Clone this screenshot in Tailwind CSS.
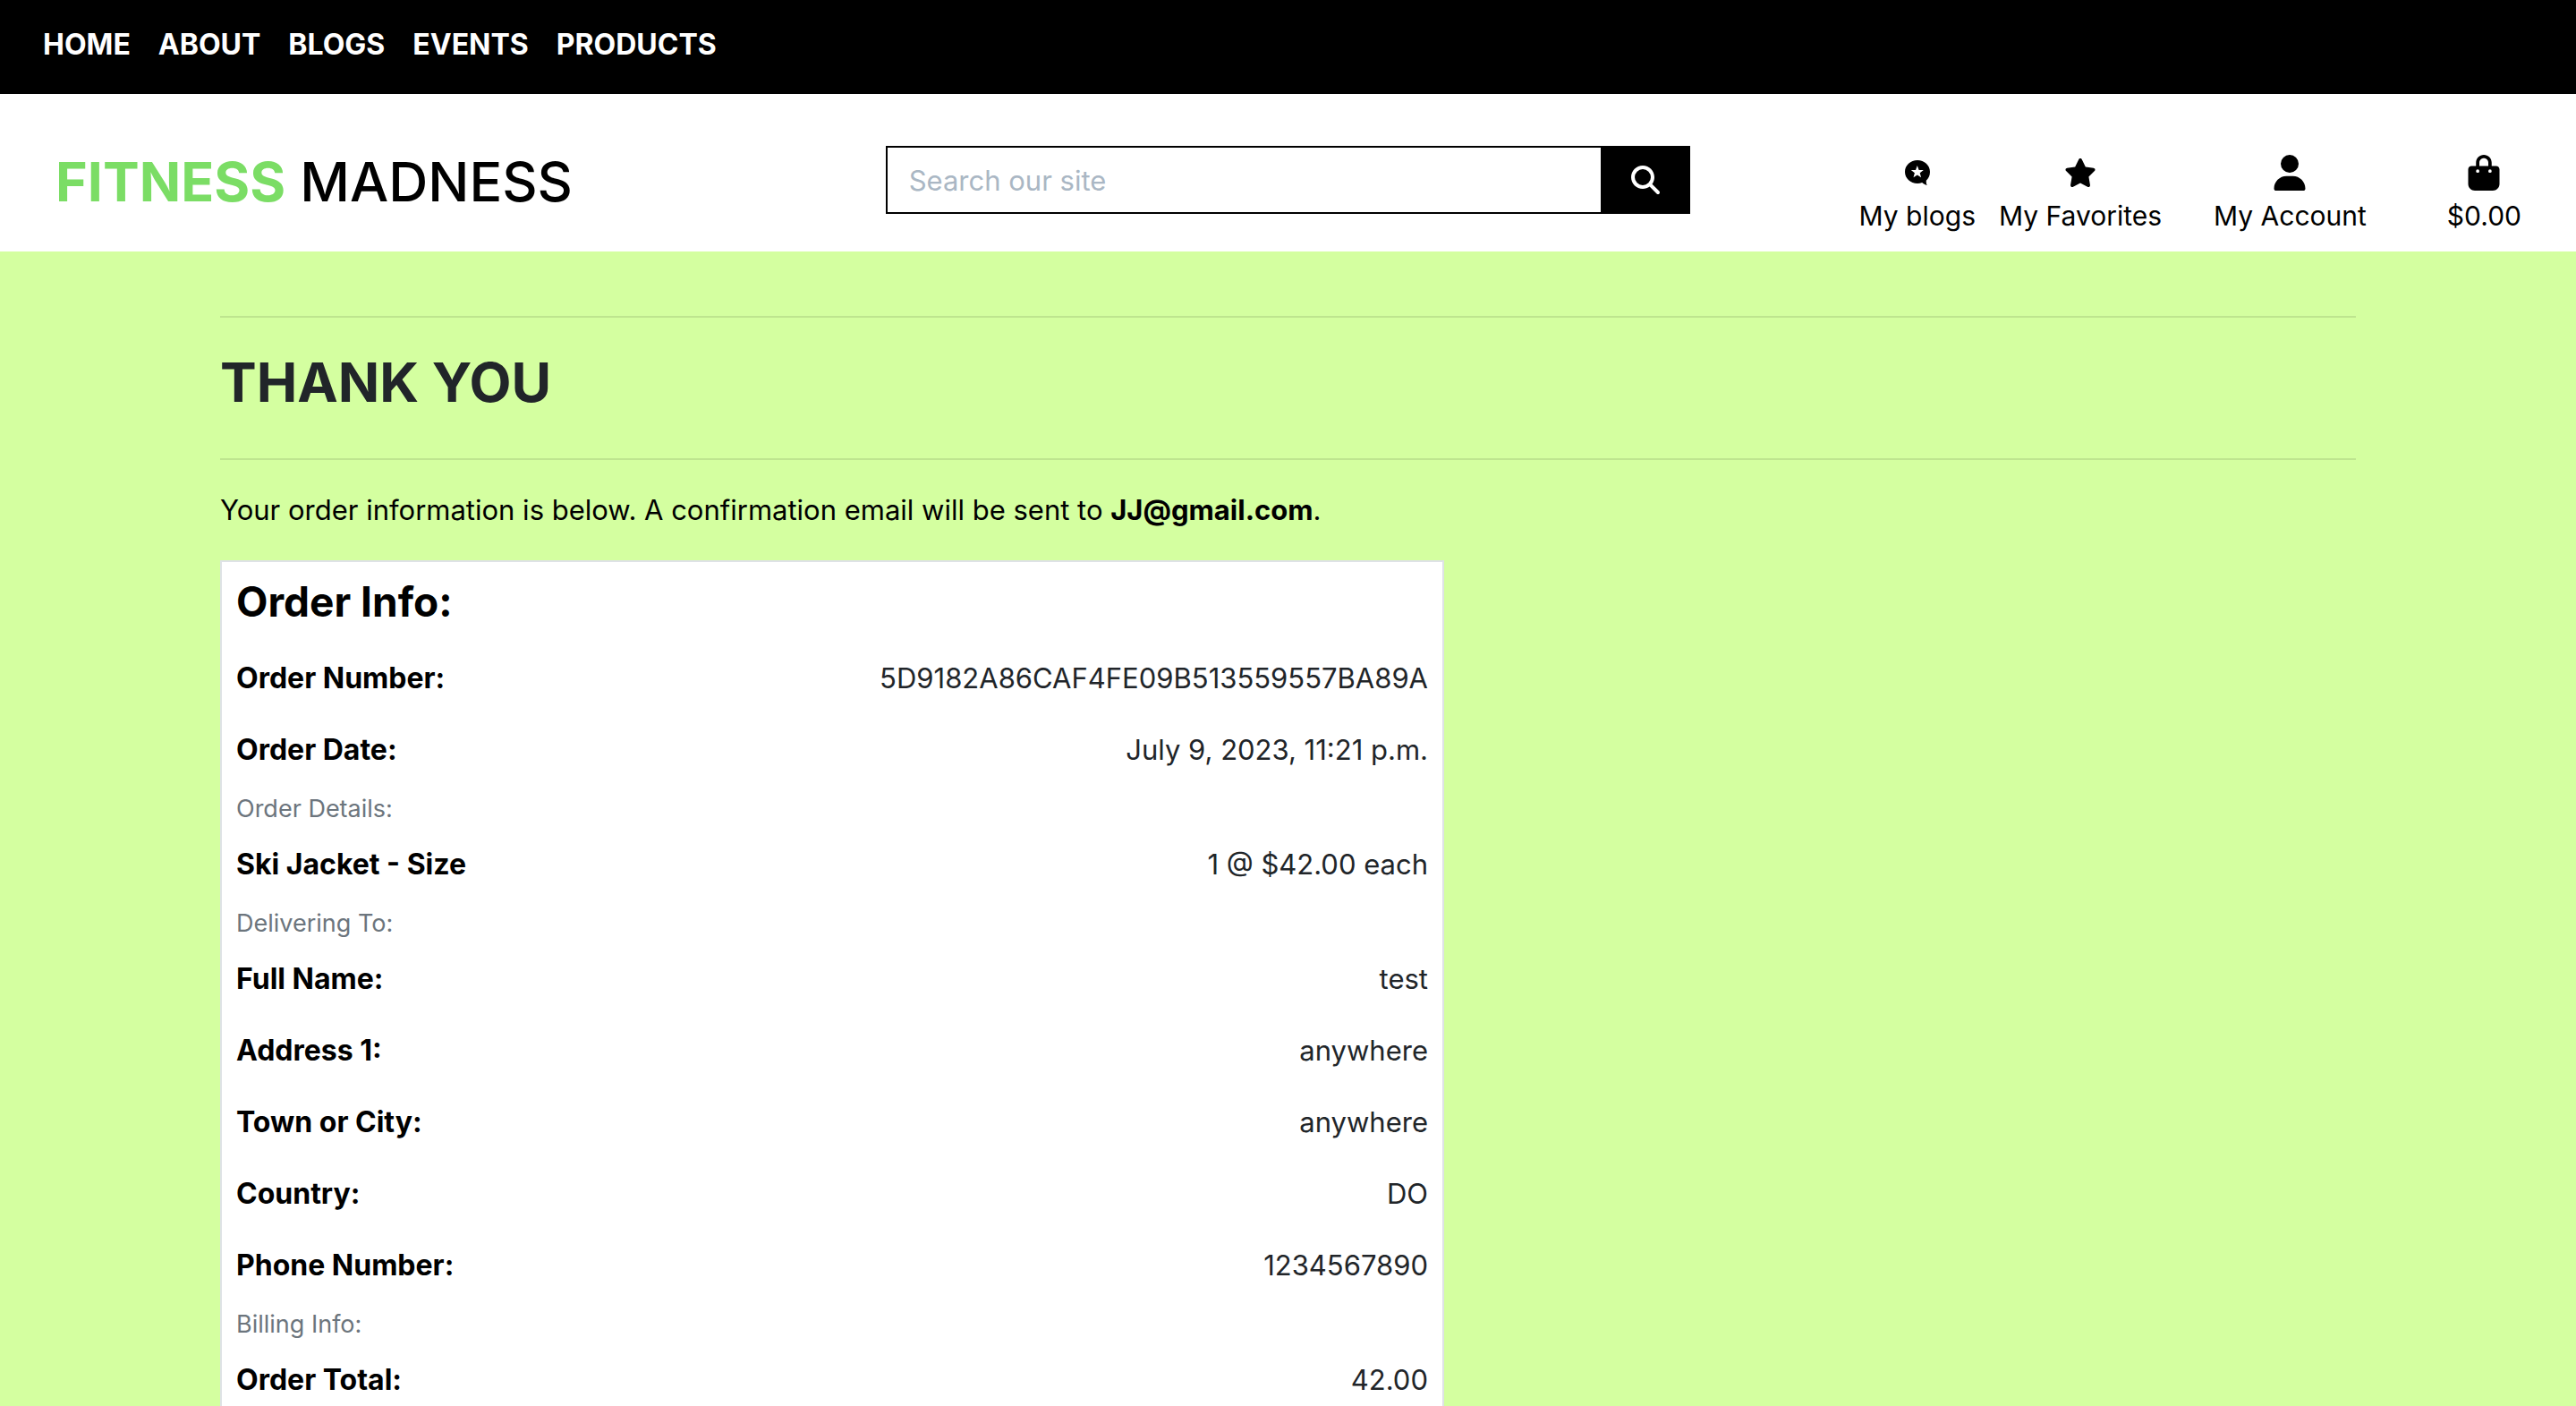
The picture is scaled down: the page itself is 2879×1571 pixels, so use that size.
<!DOCTYPE html>
<html lang="en">
<head>
<meta charset="utf-8">
<title>Fitness Madness - Thank You</title>
<script src="https://cdn.jsdelivr.net/npm/@tailwindcss/browser@4"></script>
</head>
<body class="min-h-screen bg-[#d4ffa0] font-[Inter,sans-serif] text-[31px] leading-[48px] text-black">
<nav class="flex h-[105px] items-start gap-[31px] bg-black px-12 pt-[26px] text-[32px] font-bold text-white" aria-label="Main">
  <a href="#">HOME</a><a href="#">ABOUT</a><a href="#">BLOGS</a><a href="#">EVENTS</a><a href="#">PRODUCTS</a>
</nav>
<header class="grid h-[176px] grid-cols-3 bg-white">
  <div class="pt-[60px] pl-[62px]">
    <a href="#" class="text-[61px] leading-[76px] font-medium whitespace-nowrap"><span class="font-bold text-[#7bdd65]">FITNESS</span> MADNESS</a>
  </div>
  <form class="flex px-[30px] pt-[58px]">
    <input type="search" aria-label="Search our site" placeholder="Search our site" class="h-[76px] min-w-0 flex-1 border-2 border-black bg-white px-6 placeholder:text-[#aab7c4]">
    <button type="button" aria-label="Search" class="-ml-0.5 flex h-[76px] w-[100px] items-center justify-center bg-black text-white">
      <svg class="size-8" viewBox="0 0 512 512" fill="currentColor"><path d="M416 208c0 45.900-14.900 88.300-40 122.700L502.600 457.400c12.500 12.500 12.500 32.800 0 45.300s-32.800 12.500-45.300 0L330.700 376c-34.400 25.200-76.800 40-122.700 40C93.100 416 0 322.900 0 208S93.100 0 208 0S416 93.100 416 208zM208 352a144 144 0 1 0 0-288 144 144 0 1 0 0 288z"/></svg>
    </button>
  </form>
  <div class="flex justify-end pt-[68px] pr-[61px] text-[30px] leading-[56px] whitespace-nowrap">
    <a href="#" class="mr-[26px] flex flex-col items-center">
      <span class="flex h-10 items-center"><svg class="size-8" viewBox="0 0 32 32"><path fill="currentColor" d="M16 2C8.300 2 2 7.600 2 15s6.300 13 14 13c1.800 0 3.600-.3 5.200-.9 1.500 1.200 3.300 2.300 5.600 3-.9-1.500-1.100-3.200-1-5.300C28.400 22.500 30 19 30 15 30 7.600 23.700 2 16 2z"/><path fill="#fff" d="m15.800 8 1.800 4.900 5.200.2-4.100 3.200 1.400 5-4.300-2.900-4.300 2.900 1.400-5-4.100-3.200 5.200-.2z"/></svg></span>
      <span>My blogs</span>
    </a>
    <a href="#" class="mr-[58px] flex flex-col items-center">
      <span class="flex h-10 items-center"><svg class="h-8 w-9" viewBox="0 0 576 512" fill="currentColor"><path d="M316.900 18C311.600 7 300.400 0 288.100 0s-23.400 7-28.800 18L195 150.300 51.400 171.500c-12 1.800-22 10.200-25.700 21.700s-.7 24.200 7.900 32.700L137.800 329 113.200 474.700c-2 12 3 24.200 12.900 31.300s23 8 33.800 2.300l128.300-68.500 128.300 68.500c10.800 5.700 23.900 4.900 33.800-2.300s14.900-19.300 12.900-31.300L438.500 329 542.700 225.900c8.600-8.500 11.700-21.200 7.900-32.700s-13.700-19.900-25.700-21.700L381.200 150.300 316.900 18z"/></svg></span>
      <span>My Favorites</span>
    </a>
    <a href="#" class="mr-[90px] flex flex-col items-center">
      <svg class="h-10 w-9" viewBox="0 0 448 512" fill="currentColor"><path d="M224 256A128 128 0 1 0 224 0a128 128 0 1 0 0 256zm-45.700 48C79.800 304 0 383.800 0 482.300C0 498.700 13.300 512 29.700 512H418.300c16.400 0 29.700-13.300 29.700-29.700C448 383.800 368.200 304 269.700 304H178.300z"/></svg>
      <span>My Account</span>
    </a>
    <a href="#" class="flex flex-col items-center">
      <svg class="h-10 w-9" viewBox="0 0 448 512" fill="currentColor"><path d="M160 112c0-35.300 28.700-64 64-64s64 28.700 64 64v48H160V112zm-48 48H48c-26.500 0-48 21.500-48 48V416c0 53 43 96 96 96H352c53 0 96-43 96-96V208c0-26.500-21.500-48-48-48H336V112C336 50.100 285.900 0 224 0S112 50.100 112 112v48zm24 48a24 24 0 1 1 0 48 24 24 0 1 1 0-48zm152 24a24 24 0 1 1 48 0 24 24 0 1 1-48 0z"/></svg>
      <span>$0.00</span>
    </a>
  </div>
</header>
<main class="px-[246px] pt-[72px]">
  <hr class="border-t-2 border-black/10">
  <h1 class="mt-[34px] mb-[46px] text-[61px] leading-[77px] font-bold text-[#212529]">THANK YOU</h1>
  <hr class="border-t-2 border-black/10">
  <p class="mt-8 mb-8">Your order information is below. A confirmation email will be sent to <strong>JJ@gmail.com</strong>.</p>
  <section class="w-[1368px] max-w-full border-2 border-[#dee2e6] bg-white px-4">
    <h2 class="pt-4 pb-[18px] text-[46px] leading-[56px] font-bold">Order Info:</h2>
    <dl class="text-[#212529] [&_dt]:text-[32px] [&_dt]:font-bold [&_dt]:text-black">
      <div class="flex h-20 items-center justify-between"><dt>Order Number:</dt><dd>5D9182A86CAF4FE09B513559557BA89A</dd></div>
      <div class="flex h-20 items-center justify-between"><dt>Order Date:</dt><dd>July 9, 2023, 11:21 p.m.</dd></div>
    </dl>
    <h3 class="h-12 text-[27px] leading-[52px] text-[#6c757d]">Order Details:</h3>
    <dl class="text-[#212529] [&_dt]:text-[32px] [&_dt]:font-bold [&_dt]:text-black">
      <div class="flex h-20 items-center justify-between"><dt>Ski Jacket - Size</dt><dd>1 @ $42.00 each</dd></div>
    </dl>
    <h3 class="h-12 text-[27px] leading-[52px] text-[#6c757d]">Delivering To:</h3>
    <dl class="text-[#212529] [&_dt]:text-[32px] [&_dt]:font-bold [&_dt]:text-black">
      <div class="flex h-20 items-center justify-between"><dt>Full Name:</dt><dd>test</dd></div>
      <div class="flex h-20 items-center justify-between"><dt>Address 1:</dt><dd>anywhere</dd></div>
      <div class="flex h-20 items-center justify-between"><dt>Town or City:</dt><dd>anywhere</dd></div>
      <div class="flex h-20 items-center justify-between"><dt>Country:</dt><dd>DO</dd></div>
      <div class="flex h-20 items-center justify-between"><dt>Phone Number:</dt><dd>1234567890</dd></div>
    </dl>
    <h3 class="h-12 text-[27px] leading-[52px] text-[#6c757d]">Billing Info:</h3>
    <dl class="text-[#212529] [&_dt]:text-[32px] [&_dt]:font-bold [&_dt]:text-black">
      <div class="flex h-20 items-center justify-between"><dt>Order Total:</dt><dd>42.00</dd></div>
    </dl>
  </section>
</main>
</body>
</html>
